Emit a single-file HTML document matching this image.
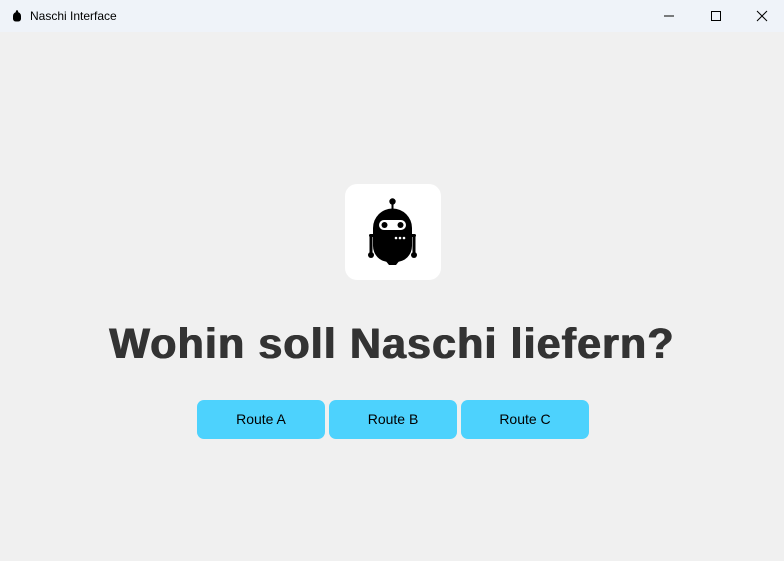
<!DOCTYPE html>
<html><head><meta charset="utf-8"><style>
html,body{margin:0;padding:0;width:784px;height:561px;overflow:hidden;background:#f0f0f0;font-family:"Liberation Sans",sans-serif;}
.tb{position:absolute;left:0;top:0;width:784px;height:32px;background:#eff3f9;}
.tb .t{position:absolute;left:30px;top:9px;font-size:12px;color:#000;}
.card{position:absolute;left:345px;top:184px;width:96px;height:96px;background:#fff;border-radius:12px;}
h1{position:absolute;left:0;width:784px;top:320px;margin:0;text-align:center;font-size:43px;font-weight:bold;color:#333;letter-spacing:1.1px;text-shadow:0.6px 0 #333,-0.6px 0 #333;}
.b{position:absolute;top:400px;width:128px;height:39px;background:#4dd2fd;border-radius:7px;font-size:14px;text-align:center;line-height:39px;color:#000;}
</style></head><body>
<div class="tb">
<svg style="position:absolute;left:11px;top:10px" width="12" height="12" viewBox="0 0 12 12"><circle cx="6" cy="1.5" r="1.2"/><path d="M2 6a4 4 0 0 1 8 0v3a3 3 0 0 1-3 2.5h-2A3 3 0 0 1 2 9z"/></svg>
<div class="t">Naschi Interface</div>
<svg style="position:absolute;left:664px;top:10px" width="110" height="12" viewBox="0 0 110 12"><line x1="0" y1="6" x2="10" y2="6" stroke="#000" stroke-width="1"/><rect x="47.5" y="1.5" width="9" height="9" fill="none" stroke="#000"/><path d="M93 1l10 10M103 1l-10 10" stroke="#000"/></svg>
</div>
<div class="card">
<svg width="96" height="96" viewBox="0 0 96 96">
<circle cx="47.5" cy="17.5" r="3.2"/><rect x="46.5" y="19" width="2" height="6"/>
<path d="M28 44a19.5 19.5 0 0 1 39 0v18a16 16 0 0 1-16 16h-7a16 16 0 0 1-16-16z"/>
<path d="M40 76h15l-4 5h-7z"/>
<rect x="24" y="50" width="6" height="3" rx="1.5"/><rect x="24.5" y="51" width="3" height="20"/><circle cx="26" cy="71" r="3"/>
<rect x="65" y="50" width="6" height="3" rx="1.5"/><rect x="67.5" y="51" width="3" height="20"/><circle cx="69" cy="71" r="3"/>
<rect x="34" y="36" width="27" height="10" rx="5" fill="#fff"/>
<circle cx="39.5" cy="41" r="3"/><circle cx="55.5" cy="41" r="3"/>
<circle cx="51" cy="54" r="1.3" fill="#fff"/><circle cx="55" cy="54" r="1.3" fill="#fff"/><circle cx="59" cy="54" r="1.3" fill="#fff"/>
</svg>
</div>
<h1>Wohin soll Naschi liefern?</h1>
<div class="b" style="left:197px">Route A</div>
<div class="b" style="left:329px">Route B</div>
<div class="b" style="left:461px">Route C</div>
</body></html>
